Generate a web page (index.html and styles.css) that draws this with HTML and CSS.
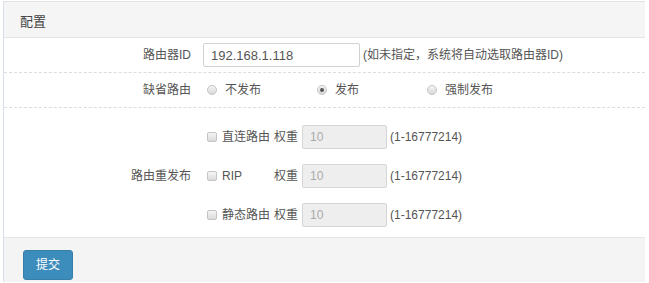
FILE: index.html
```html
<!DOCTYPE html>
<html lang="zh-CN">
<head>
<meta charset="utf-8">
<title>配置</title>
<link rel="stylesheet" href="styles.css">
</head>
<body>
<div class="panel">
  <div class="panel-head">配置</div>
  <div class="row row-id">
    <div class="label">路由器ID</div>
    <div class="ctrl">
      <input class="text id-input" type="text" value="192.168.1.118">
      <span class="hint">(如未指定，系统将自动选取路由器ID)</span>
    </div>
  </div>
  <div class="row row-def">
    <div class="label">缺省路由</div>
    <div class="ctrl">
      <label class="opt"><span class="radio"></span>不发布</label>
      <label class="opt"><span class="radio checked"></span>发布</label>
      <label class="opt"><span class="radio"></span>强制发布</label>
    </div>
  </div>
  <div class="row row-redis">
    <div class="label">路由重发布</div>
    <div class="ctrl stack">
      <div class="sub">
        <label class="chk"><span class="box"></span>直连路由</label>
        <span class="wt">权重</span>
        <input class="text wt-input" type="text" value="10" disabled>
        <span class="hint">(1-16777214)</span>
      </div>
      <div class="sub">
        <label class="chk"><span class="box"></span>RIP</label>
        <span class="wt">权重</span>
        <input class="text wt-input" type="text" value="10" disabled>
        <span class="hint">(1-16777214)</span>
      </div>
      <div class="sub">
        <label class="chk"><span class="box"></span>静态路由</label>
        <span class="wt">权重</span>
        <input class="text wt-input" type="text" value="10" disabled>
        <span class="hint">(1-16777214)</span>
      </div>
    </div>
  </div>
  <div class="panel-foot">
    <button class="btn" type="button">提交</button>
  </div>
</div>
</body>
</html>
```

FILE: styles.css
```css
html, body {
  margin: 0;
  padding: 0;
  background: #ffffff;
}
body {
  font-family: "Liberation Sans", "Noto Sans CJK SC", sans-serif;
  font-size: 12px;
  color: #555;
  height: 283px;
  overflow: hidden;
}
.panel {
  margin: 1px 0 0 3px;
  width: 641px;
  border-left: 1px solid #d9dfe6;
  border-top: 1px solid #e2e2e2;
}
.panel-head {
  height: 35px;
  line-height: 39px;
  padding-left: 16px;
  font-size: 13px;
  color: #444;
  background: #f5f5f5;
  border-bottom: 1px solid #e4e4e4;
}
.row {
  display: grid;
  grid-template-columns: 187px 1fr;
  column-gap: 12px;
  align-items: center;
  border-bottom: 1px dashed #dcdcdc;
}
.row-id { height: 34px; }
.row-def { height: 34px; }
.row-redis {
  border-bottom: 1px solid #e6e6e6;
  padding: 17px 0 10px;
}
.label {
  text-align: right;
  line-height: 16px;
  color: #555;
}
.ctrl {
  display: flex;
  align-items: center;
  line-height: 16px;
}
.text {
  box-sizing: border-box;
  height: 24px;
  border: 1px solid #d2d2d2;
  border-radius: 2px;
  padding: 0 7px;
  font-family: "Liberation Sans", "Noto Sans CJK SC", sans-serif;
  color: #555;
  background: #fff;
  margin: 0;
}
.id-input {
  width: 157px;
  font-size: 13px;
}
.row-id .hint { margin-left: 3px; }
.opt {
  display: flex;
  align-items: center;
  flex: 0 0 110px;
  margin-left: 4px;
  margin-right: -4px;
}
.radio {
  box-sizing: border-box;
  width: 10px;
  height: 10px;
  border-radius: 50%;
  border: 1px solid #c4c4c4;
  background: linear-gradient(#f4f4f4, #d8d8d8);
  margin-right: 8px;
  position: relative;
}
.radio.checked::after {
  content: "";
  position: absolute;
  left: 2px;
  top: 2px;
  width: 4px;
  height: 4px;
  border-radius: 50%;
  background: #555;
}
.stack {
  flex-direction: column;
  align-items: flex-start;
  gap: 15px;
}
.sub {
  display: flex;
  align-items: center;
  height: 24px;
  padding-left: 4px;
}
.chk {
  display: flex;
  align-items: center;
  width: 67px;
  color: #555;
}
.box {
  box-sizing: border-box;
  width: 10px;
  height: 10px;
  border: 1px solid #c4c4c4;
  border-radius: 2px;
  background: linear-gradient(#f6f6f6, #dadada);
  margin-right: 5px;
}
.wt { color: #555; }
.wt-input {
  width: 85px;
  margin-left: 4px;
  font-size: 12px;
  background: #eeeeee;
  color: #aaa;
  border-color: #d6d6d6;
}
.sub .hint { margin-left: 3px; }
.panel-foot {
  background: #f4f4f4;
  height: 44px;
  padding: 12px 0 0 19px;
  box-sizing: border-box;
}
.btn {
  height: 30px;
  padding: 0 12px;
  border: 1px solid #367fa9;
  border-radius: 3px;
  background: #3c8dbc;
  color: #fff;
  font-family: "Liberation Sans", "Noto Sans CJK SC", sans-serif;
  font-size: 12px;
  line-height: 28px;
}
```
